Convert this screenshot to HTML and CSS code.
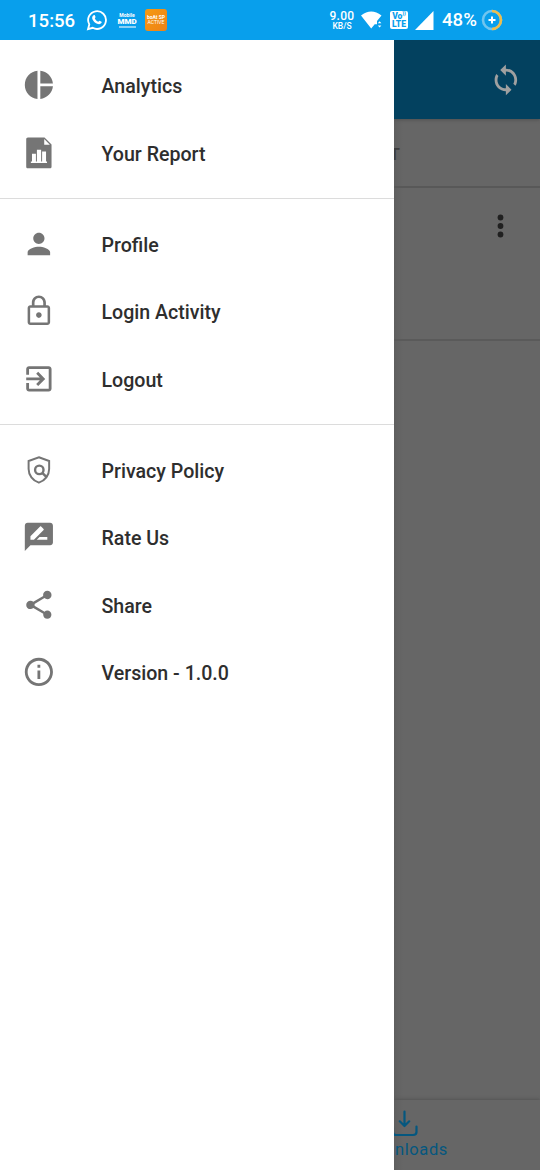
FILE: index.html
```html
<!DOCTYPE html>
<html lang="en">
<head>
<meta charset="utf-8">
<title>Navigation drawer</title>
<link rel="stylesheet" href="styles.css">
</head>
<body>
<div class="screen">
  <header class="status">
    <span class="clock">15:56</span>
    <svg class="whatsapp" viewBox="0 0 24 24"><path d="M2.2 22l1.4-5.2A9.7 9.7 0 1 1 7.3 20.500z" fill="none" stroke="#fff" stroke-width="2"/><path d="M8.300 6.800c.5-.5 1.100-.4 1.300.1l.8 1.900c.1.500-.8 1.200-.7 1.500.7 1.500 2 2.800 3.700 3.500.4.1 1-1.100 1.500-.9l2 1c.4.300.2 1-.1 1.500-1 1.400-2.900 1.500-4.700.7-2.200-.9-4.300-3-5.100-5-.6-1.700-.2-3.200 1.300-4.300z" fill="#fff"/></svg>
    <span class="brand"><span class="brand-small">Mobile</span><span class="brand-big">MMD</span><span class="brand-line"></span></span>
    <span class="badge"><span>boAt SP</span><span class="badge-thin">ACTIVE</span></span>
    <span class="speed"><span class="rate">9.00</span><span class="unit">KB/S</span></span>
    <svg class="wifi" viewBox="0 0 21 18"><path d="M0 4.500Q10.200-3.500 20.500 4.500L16 10v3.200h-2.300L10.200 17.500z" fill="#fff"/><path d="M16.800 12.300l1.800-2 1.800 2zM16.800 14.500l1.800 2 1.800-2z" fill="#fff"/></svg>
    <span class="volte"><span>Vo<sup>))</sup></span><span>LTE</span></span>
    <svg class="signal" viewBox="0 0 19 19"><path d="M18.500 0v19H0z" fill="#fff"/></svg>
    <span class="percent">48%</span>
    <svg class="battery" viewBox="0 0 22 22"><circle cx="11" cy="11" r="9" fill="none" stroke="#70c5ef" stroke-width="2.600"/><path d="M11 2a9 9 0 0 1 0 18" fill="none" stroke="#edbd4b" stroke-width="2.600"/><path d="M11 7.500v7M7.500 11h7" stroke="#fff" stroke-width="2"/></svg>
  </header>
  <div class="body">
    <nav class="drawer">
      <ul class="group">
        <li class="item"><svg viewBox="0 0 24 24"><path d="M11 2v20c-5.070-.5-9-4.790-9-10s3.930-9.500 9-10zm2.030 0v8.990H22c-.47-4.740-4.240-8.520-8.970-8.990zm0 11.010V22c4.740-.47 8.500-4.250 8.970-8.990h-8.970z"/></svg><span>Analytics</span></li>
        <li class="item"><svg viewBox="0 0 24 24"><path fill-rule="evenodd" d="M4.200 1H16l5 5v15.800c0 .7-.5 1.200-1.200 1.200H4.200C3.500 23 3 22.500 3 21.800V2.200C3 1.500 3.500 1 4.200 1zM15.800 2.200v4h4zM6.300 18.100v1.100h11.500v-1.100h-.7v-7h-2.800v7h-.7V9.800h-3v8.300h-.7v-5.500H7.100v5.500z"/></svg><span>Your Report</span></li>
      </ul>
      <ul class="group">
        <li class="item"><svg viewBox="0 0 24 24"><path d="M12 12c2.210 0 4-1.790 4-4s-1.790-4-4-4-4 1.790-4 4 1.790 4 4 4zm0 2c-2.670 0-8 1.340-8 4v2h16v-2c0-2.660-5.330-4-8-4z"/></svg><span>Profile</span></li>
        <li class="item"><svg viewBox="0 0 24 24"><path d="M12 17c1.100 0 2-.9 2-2s-.9-2-2-2-2 .9-2 2 .9 2 2 2zm6-9h-1V6c0-2.760-2.240-5-5-5S7 3.240 7 6v2H6c-1.100 0-2 .9-2 2v10c0 1.100.9 2 2 2h12c1.100 0 2-.9 2-2V10c0-1.100-.9-2-2-2zM8.900 6c0-1.710 1.390-3.100 3.100-3.100s3.100 1.390 3.100 3.100v2H8.900V6zM18.200 20.200H5.800V9.800h12.400v10.400z"/></svg><span>Login Activity</span></li>
        <li class="item"><svg viewBox="0 0 24 24"><path d="M10.090 15.590L11.500 17l5-5-5-5-1.410 1.410L12.670 11H3v2h9.670l-2.580 2.590zM19 3H5c-1.110 0-2 .9-2 2v4h2V5h14v14H5v-4H3v4c0 1.100.89 2 2 2h14c1.100 0 2-.9 2-2V5c0-1.100-.9-2-2-2z"/></svg><span>Logout</span></li>
      </ul>
      <ul class="group">
        <li class="item"><svg viewBox="0 0 24 24"><g fill="none" stroke="#757575"><path d="M12 3L19.300 5.700v5.600c0 4.400-2.900 8.400-7.300 9.800-4.400-1.400-7.300-5.400-7.300-9.800V5.700z" stroke-width="1.400"/><circle cx="12.300" cy="12" r="3" stroke-width="1.700"/><path d="M14.400 14.100l3.300 3.300" stroke-width="1.800"/></g></svg><span>Privacy Policy</span></li>
        <li class="item"><svg viewBox="0 0 24 24"><path d="M20 2H4c-1.100 0-1.990.9-1.990 2L2 22l4-4h14c1.100 0 2-.9 2-2V4c0-1.100-.9-2-2-2zM6 14v-2.470l6.880-6.880c.2-.2.510-.2.710 0l1.770 1.770c.2.200.2.510 0 .710L8.470 14H6zm12 0h-7.500l2-2H18v2z"/></svg><span>Rate Us</span></li>
        <li class="item"><svg viewBox="0 0 24 24"><path d="M18 16.080c-.76 0-1.440.3-1.960.77L8.910 12.700c.05-.23.090-.46.090-.7s-.04-.47-.09-.7l7.050-4.110c.54.5 1.250.81 2.040.81 1.660 0 3-1.340 3-3s-1.340-3-3-3-3 1.340-3 3c0 .24.040.47.090.7L8.040 9.810C7.500 9.310 6.790 9 6 9c-1.660 0-3 1.340-3 3s1.340 3 3 3c.79 0 1.500-.31 2.040-.81l7.120 4.160c-.05.210-.08.430-.08.650 0 1.610 1.310 2.920 2.920 2.920s2.920-1.310 2.920-2.920-1.310-2.920-2.920-2.920z"/></svg><span>Share</span></li>
        <li class="item"><svg viewBox="0 0 24 24"><path d="M11 17h2v-6h-2v6zm1-15C6.480 2 2 6.480 2 12s4.480 10 10 10 10-4.480 10-10S17.520 2 12 2zm0 18c-4.410 0-8-3.590-8-8s3.590-8 8-8 8 3.590 8 8-3.590 8-8 8zM11 9h2V7h-2v2z"/></svg><span>Version - 1.0.0</span></li>
      </ul>
    </nav>
    <main class="page">
      <div class="toolbar"><svg viewBox="0 0 24 24"><path d="M12 4V1L8 5l4 4V6c3.310 0 6 2.690 6 6 0 1.010-.25 1.970-.7 2.800l1.460 1.460C19.540 15.030 20 13.570 20 12c0-4.420-3.580-8-8-8zm0 14c-3.310 0-6-2.690-6-6 0-1.010.25-1.970.7-2.800L5.240 7.740C4.460 8.970 4 10.430 4 12c0 4.420 3.580 8 8 8v3l4-4-4-4v3z"/></svg></div>
      <div class="tabs"><span>T</span></div>
      <div class="card"><svg viewBox="0 0 6 24"><circle cx="3" cy="3.500" r="2.900"/><circle cx="3" cy="12" r="2.900"/><circle cx="3" cy="20.500" r="2.900"/></svg></div>
      <div class="content"></div>
      <footer class="bottom">
        <svg viewBox="0 0 26 28"><path d="M12.500 1.500v14M7.800 11.300l4.700 4.700 4.700-4.700M1 17v5q0 3 3 3h17q3.500 0 3.500-3v-5.500" fill="none" stroke="#04577f" stroke-width="2.200" stroke-linecap="round" stroke-linejoin="round"/></svg>
        <span>nloads</span>
      </footer>
    </main>
  </div>
</div>
</body>
</html>
```
FILE: styles.css
```css
* { box-sizing: border-box; }
body { margin: 0; font-family: Roboto, "Noto Sans", sans-serif; }
.screen { width: 540px; height: 1170px; display: flex; flex-direction: column; overflow: hidden; }

.status { height: 40px; flex: none; display: flex; align-items: center; background: #089fec; color: #fff; padding-left: 28px; }
.status svg { flex: none; display: block; }
.clock { width: 58px; padding-top: 1px; font-size: 18.6px; font-weight: 500; line-height: 40px; }
.whatsapp { width: 22px; height: 22px; }
.brand { width: 18px; margin-left: 10px; display: flex; flex-direction: column; align-items: center; }
.brand-small { font-size: 5px; line-height: 5px; font-weight: 700; }
.brand-big { font-size: 8px; line-height: 7px; font-weight: 900; }
.brand-line { width: 17px; height: 2px; margin-top: 1px; background: #8bd1f5; }
.badge { width: 22px; height: 22px; margin-left: 9px; border-radius: 3px; background: linear-gradient(135deg, #f59a10, #ee8117); display: flex; flex-direction: column; align-items: center; justify-content: center; font-size: 5px; line-height: 5px; font-weight: 700; white-space: nowrap; }
.badge-thin { font-weight: 400; }
.speed { width: 26px; margin-left: 162px; display: flex; flex-direction: column; align-items: center; font-weight: 500; }
.rate { font-size: 12px; line-height: 11px; letter-spacing: .3px; }
.unit { font-size: 8.5px; line-height: 8px; }
.wifi { width: 21px; height: 18px; margin-left: 6px; }
.volte { width: 18px; height: 18px; margin-left: 8px; border-radius: 2px; background: #fff; color: #089fec; display: flex; flex-direction: column; align-items: center; justify-content: center; font-size: 8.5px; line-height: 8px; font-weight: 900; }
.volte sup { font-size: 5px; line-height: 0; }
.signal { width: 19px; height: 19px; margin-left: 7px; }
.percent { width: 39px; margin-left: 8px; font-size: 18.6px; font-weight: 500; }
.battery { width: 22px; height: 22px; }

.body { flex: 1; display: flex; min-height: 0; }
.drawer { width: 394px; flex: none; background: #fff; }
.group { list-style: none; margin: 0; padding: 11.25px 0; }
.group + .group { border-top: 1.4px solid #dcdcdc; }
.item { height: 67.5px; display: flex; align-items: center; padding-left: 22px; font-size: 19.6px; font-weight: 500; color: #2e2e2e; }
.item svg { width: 33.75px; height: 33.75px; margin-right: 45.75px; fill: #757575; }
.item span { padding-top: 3px; }

.page { flex: 1; min-width: 0; display: flex; flex-direction: column; overflow: hidden; background: linear-gradient(90deg, #5f5f5f, #666 9px); }
.toolbar { height: 79px; flex: none; display: flex; align-items: center; justify-content: flex-end; padding-right: 17px; background: #03415f; box-shadow: 0 1px 3px #505050; }
.toolbar svg { width: 33.75px; height: 33.75px; fill: #a0a0a0; }
.tabs { height: 69px; flex: none; display: flex; align-items: center; border-bottom: 2px solid #585858; color: #3c3c3c; font-size: 17px; font-weight: 500; }
.tabs span { margin-left: -4.6px; padding-top: 2px; }
.card { height: 153px; flex: none; display: flex; justify-content: flex-end; padding: 26px 36px 0 0; border-bottom: 2px solid #5a5a5a; }
.card svg { width: 7px; height: 24px; fill: #202020; }
.content { flex: 1; }
.bottom { height: 70px; flex: none; padding-top: 10px; box-shadow: 0 -1px 3px #545454; color: #04577f; display: flex; flex-direction: column; }
.bottom svg { width: 26px; height: 28px; margin-left: -2px; }
.bottom span { font-size: 16.5px; line-height: 20px; margin-top: 2px; margin-left: 1px; letter-spacing: .6px; }
```
